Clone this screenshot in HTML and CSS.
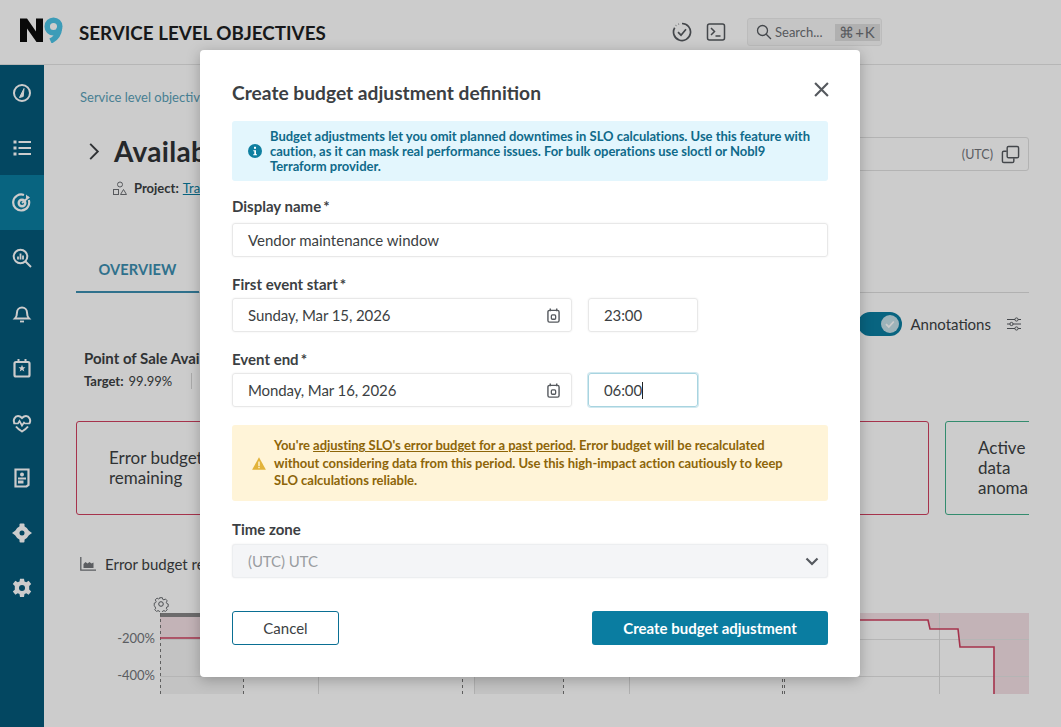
FILE: index.html
```html
<!DOCTYPE html>
<html lang="en">
<head>
<meta charset="utf-8">
<title>Service Level Objectives</title>
<link rel="stylesheet" href="styles.css">
</head>
<body>
<div class="app">
  <header class="topbar">
    <svg class="logo" viewBox="0 0 44 26"><path d="M0 1.500h7l9 13V1.500h7V25h-6.500L7 11.500V25H0z" fill="#0c0c0c"/><circle cx="33.500" cy="9.500" r="6.300" fill="none" stroke="#4cc3e6" stroke-width="5.500"/><path d="M39.500 11c-.5 6-3.500 10.500-9 13" fill="none" stroke="#4cc3e6" stroke-width="5.500"/></svg>
    <h1 class="app-title">SERVICE LEVEL OBJECTIVES</h1>
    <div class="top-actions">
      <svg class="top-icon" viewBox="0 0 20 20"><path d="M10 1.500a8.500 8.500 0 1 1-7.300 4.200" fill="none" stroke="#55595e" stroke-width="1.700"/><path d="M3.800 3.700l.4-.4M6.500 2.200l.4-.2" stroke="#55595e" stroke-width="1.700"/><path d="M6 10.200l3 3 5-6" fill="none" stroke="#55595e" stroke-width="1.700"/></svg>
      <svg class="top-icon" viewBox="0 0 20 20"><rect x="1.500" y="2" width="17" height="16" rx="2" fill="none" stroke="#55595e" stroke-width="1.500"/><path d="M5 6l3.500 3.500L5 13M9.500 14h5" fill="none" stroke="#55595e" stroke-width="1.500"/></svg>
      <div class="search">
        <svg class="search-icon" viewBox="0 0 16 16"><circle cx="6.500" cy="6.500" r="5" fill="none" stroke="#55595e" stroke-width="1.300"/><path d="M10.200 10.200l4.800 4.800" stroke="#55595e" stroke-width="1.300"/></svg>
        <span class="search-text">Search...</span>
        <span class="kbd">⌘+K</span>
      </div>
    </div>
  </header>
  <div class="body-row">
    <nav class="sidebar">
      <div class="nav-item"><svg viewBox="0 0 20 20"><circle cx="10" cy="10" r="8" fill="none" stroke="#fff" stroke-width="2"/><path d="M7.500 14.500l4.500-9-.8 8z" fill="#fff" stroke="#fff"/></svg></div>
      <div class="nav-item"><svg viewBox="0 0 20 20"><path d="M6.500 4H19M6.500 10H19M6.500 16H19" stroke="#fff" stroke-width="2"/><path d="M1.500 4h3M1.500 10h3M1.500 16h3" stroke="#fff" stroke-width="3"/></svg></div>
      <div class="nav-item active"><svg viewBox="0 0 20 20"><path d="M16.800 7a8 8 0 1 1-4.800-5" fill="none" stroke="#fff" stroke-width="2.200"/><circle cx="10" cy="10" r="3.300" fill="none" stroke="#fff" stroke-width="2.400"/><path d="M10 10l7-6" stroke="#fff" stroke-width="1.800"/><path d="M14 1.500v3.500h4z" fill="#fff"/></svg></div>
      <div class="nav-item"><svg viewBox="0 0 20 20"><circle cx="8.500" cy="8.500" r="6.800" fill="none" stroke="#fff" stroke-width="2"/><path d="M13.500 13.500L19 19" stroke="#fff" stroke-width="2"/><path d="M6 11.500V8.500M8.500 11.500V5.500M11 11.500V7.500" stroke="#fff" stroke-width="1.800"/></svg></div>
      <div class="nav-item"><svg viewBox="0 0 20 20"><path d="M3 15.500h14c-1.500-1.500-2-2.500-2-6a5 5 0 0 0-10 0c0 3.500-.5 4.500-2 6z" fill="none" stroke="#fff" stroke-width="2"/><path d="M8 18.500h4" stroke="#fff" stroke-width="1.800"/></svg></div>
      <div class="nav-item"><svg viewBox="0 0 20 20"><rect x="2.500" y="4" width="15" height="14.500" rx="1.500" fill="none" stroke="#fff" stroke-width="2.200"/><path d="M6.500 1v3.500M13.500 1v3.500" stroke="#fff" stroke-width="2"/><path d="M10 6.800l1 2.400 2.500.1-2 1.600.8 2.500-2.300-1.400-2.300 1.400.8-2.500-2-1.600 2.500-.1z" fill="#fff"/></svg></div>
      <div class="nav-item"><svg viewBox="0 0 20 20"><path d="M4 13.500c1.500 2 3.500 3.500 6 5 2.500-1.500 4.500-3 6-5" fill="none" stroke="#fff" stroke-width="2"/><path d="M2.600 10.500C.5 7 3 3 6 3c1.800 0 3 1 4 2 1-1 2.200-2 4-2 3 0 5.500 4 3.400 7.500" fill="none" stroke="#fff" stroke-width="2"/><path d="M1.500 10.500H6l1.500-2.500 2.500 4.500 2-3 1 1h5" fill="none" stroke="#fff" stroke-width="1.700"/></svg></div>
      <div class="nav-item"><svg viewBox="0 0 20 20"><path d="M3.500 1.500h13v15.500l-2 1.500h-11z" fill="none" stroke="#fff" stroke-width="2.200"/><circle cx="10" cy="6.500" r="2" fill="#fff"/><rect x="6" y="9.500" width="8" height="2" fill="#fff"/><rect x="6" y="12.500" width="5.500" height="3" fill="#fff"/></svg></div>
      <div class="nav-item"><svg viewBox="0 0 20 20"><circle cx="10" cy="10" r="4.700" fill="none" stroke="#fff" stroke-width="4.400"/><rect x="7.500" y="0.500" width="5" height="5" rx="1" fill="#fff"/><rect x="7.500" y="14.500" width="5" height="5" rx="1" fill="#fff"/><path d="M0 10l4.500-3.200v6.400zM20 10l-4.500-3.200v6.400z" fill="#fff"/></svg></div>
      <div class="nav-item"><svg viewBox="0 0 20 20"><path d="M8 .8h4l.5 2.700 1.800.8 2.300-1.500 2.600 3.300-2 1.900v3.600l2 1.900-2.600 3.300-2.300-1.500-1.800.8-.5 2.900H8l-.5-2.900-1.800-.8-2.300 1.500L.8 13.600l2-1.900V8l-2-1.900 2.600-3.300 2.300 1.500 1.800-.8z" fill="#fff"/><circle cx="10" cy="10" r="3" fill="#04597a"/></svg></div>
    </nav>
    <main class="content">
      <div class="crumb">Service level objectives</div>
      <div class="slo-head">
        <svg class="chev" viewBox="0 0 12 20"><path d="M2 2l8 8-8 8" fill="none" stroke="#3c3f43" stroke-width="2"/></svg>
        <div class="slo-name">Availability</div>
        <div class="range"><span class="utc">(UTC)</span><svg class="copy" viewBox="0 0 20 20"><rect x="6.500" y="1.500" width="12" height="12" rx="1.500" fill="none" stroke="#55595e" stroke-width="1.500"/><path d="M6 6.500H3a1.500 1.500 0 0 0-1.500 1.500v9A1.500 1.500 0 0 0 3 18.500h9a1.500 1.500 0 0 0 1.500-1.500v-3" fill="none" stroke="#55595e" stroke-width="1.500"/></svg></div>
      </div>
      <div class="project">
        <svg class="proj-icon" viewBox="0 0 14 14"><circle cx="7" cy="3.500" r="2.500" fill="none" stroke="#6d7075"/><rect x=".5" y="8.500" width="5" height="5" fill="none" stroke="#6d7075"/><path d="M10.500 8.500l3 5h-6z" fill="none" stroke="#6d7075"/></svg>
        <b>Project:</b><span class="proj-link">Train</span>
      </div>
      <div class="tabs"><div class="tab-active">OVERVIEW</div></div>
      <div class="annot-row">
        <span class="toggle"><span class="knob"><svg viewBox="0 0 14 14"><path d="M3 7.200l2.800 2.800 5-5.500" fill="none" stroke="#fff" stroke-width="1.800"/></svg></span></span>
        <span class="annot-label">Annotations</span>
        <svg class="sliders" viewBox="0 0 16 14"><path d="M1 2.500h14M1 7h14M1 11.500h14" stroke="#55595e"/><circle cx="10.500" cy="2.500" r="1.600" fill="#ffffff" stroke="#55595e"/><circle cx="5.500" cy="7" r="1.600" fill="#ffffff" stroke="#55595e"/><circle cx="10.500" cy="11.500" r="1.600" fill="#ffffff" stroke="#55595e"/></svg>
      </div>
      <div class="slo-title">Point of Sale Availability</div>
      <div class="target"><b>Target:</b> 99.99%<span class="vsep"></span></div>
      <div class="cards">
        <div class="card card-red"><span class="card-text">Error budget<br>remaining</span></div>
        <div class="card card-green"><span class="card-text">Active<br>data<br>anomalies</span></div>
      </div>
      <div class="chart-title">
        <svg class="chart-icon" viewBox="0 0 16 14"><path d="M.8 0v13.200H16" fill="none" stroke="#72757a" stroke-width="1.300"/><path d="M3.500 11V7l2-2 2 1.500L9.500 5l2 1.500 2-1V11z" fill="#72757a"/></svg>
        Error budget remaining
      </div>
      <div class="chart">
        <svg class="gear" viewBox="0 0 16 16"><path d="M6.500 1h3l.4 1.800 1.400.6 1.600-1 2 2.100-1 1.600.6 1.400 1.500.5v2.900l-1.500.4-.6 1.400 1 1.600-2 2-1.600-1-1.400.6-.4 1.500h-3l-.4-1.500-1.400-.6-1.600 1-2-2 1-1.600-.6-1.400L.5 9.900V7l1.500-.5.600-1.400-1-1.600 2-2.100 1.600 1 1.400-.6z" fill="none" stroke="#5a5d62" transform="translate(.8 .8) scale(.9)"/><circle cx="8" cy="8" r="2.300" fill="none" stroke="#5a5d62"/></svg>
        <span class="axis axis-200">-200%</span>
        <span class="axis axis-400">-400%</span>
        <svg class="plot" viewBox="0 0 869 81" preserveAspectRatio="none">
          <rect x="0" y="0" width="83" height="81" fill="#f4f4f4"/>
          <rect x="314" y="0" width="89" height="81" fill="#f4f4f4"/>
          <path d="M0 0H869V81H834V34H800L798 16H770L768 7H600V25H0z" fill="#f4e0e5"/>
          <rect x="0" y="0" width="200" height="4" fill="#888687"/>
          <path d="M0 26.500H869M0 63.500H869" stroke="#e3e3e3"/>
          <path d="M158.500 0V81M314.500 0V81M469.500 0V81M779.500 0V81" stroke="#dcdcdc"/>
          <path d="M.5 0V81M83.500 0V81M302.500 0V81M403.500 0V81M622.500 0V81M624.500 0V81" stroke="#777" stroke-dasharray="3 3" fill="none"/>
          <path d="M0 25H100M600 7H768L770 16H798L800 34H834V81" fill="none" stroke="#cf3f5f" stroke-width="1.600"/>
        </svg>
      </div>
    </main>
  </div>
</div>

<div class="overlay"></div>

<section class="modal">
  <div class="modal-head">
    <h2 class="modal-title">Create budget adjustment definition</h2>
    <svg class="close" viewBox="0 0 14 14"><path d="M1 1l12 12M13 1L1 13" stroke="#55595e" stroke-width="2"/></svg>
  </div>
  <div class="notice notice-info">
    <svg class="notice-icon" viewBox="0 0 14 14"><circle cx="7" cy="7" r="7" fill="#0f7fa0"/><rect x="6" y="2.800" width="2" height="2" fill="#fff"/><path d="M5.300 6.200H8v4h1v1H5.200v-1h1.100v-3h-1z" fill="#fff"/></svg>
    <p>Budget adjustments let you omit planned downtimes in SLO calculations. Use this feature with caution, as it can mask real performance issues. For bulk operations use sloctl or Nobl9 Terraform provider.</p>
  </div>
  <label class="field-label label-name">Display name<span class="req">*</span></label>
  <div class="input">Vendor maintenance window</div>
  <label class="field-label">First event start<span class="req">*</span></label>
  <div class="date-row">
    <div class="input date">Sunday, Mar 15, 2026
      <svg class="cal" viewBox="0 0 12 14"><path d="M3 .5v2.500M9 .5v2.500" stroke="#55595e" stroke-width="1.300"/><rect x=".8" y="2.200" width="10.400" height="11" rx="1.500" fill="none" stroke="#55595e" stroke-width="1.300"/><rect x="4" y="6.500" width="4" height="4" rx="1" fill="none" stroke="#55595e" stroke-width="1.200"/></svg>
    </div>
    <div class="input time">23:00</div>
  </div>
  <label class="field-label">Event end<span class="req">*</span></label>
  <div class="date-row">
    <div class="input date">Monday, Mar 16, 2026
      <svg class="cal" viewBox="0 0 12 14"><path d="M3 .5v2.500M9 .5v2.500" stroke="#55595e" stroke-width="1.300"/><rect x=".8" y="2.200" width="10.400" height="11" rx="1.500" fill="none" stroke="#55595e" stroke-width="1.300"/><rect x="4" y="6.500" width="4" height="4" rx="1" fill="none" stroke="#55595e" stroke-width="1.200"/></svg>
    </div>
    <div class="input time focus">06:00<span class="caret"></span></div>
  </div>
  <div class="notice notice-warn">
    <svg class="warn-icon" viewBox="0 0 14 13"><path d="M7 .3l6.900 12.400H.1z" fill="#e2b33a"/><rect x="6.300" y="4.500" width="1.400" height="4.500" fill="#fff5d9"/><rect x="6.300" y="9.800" width="1.400" height="1.400" fill="#fff5d9"/></svg>
    <p>You're <u>adjusting SLO's error budget for a past period</u>. Error budget will be recalculated without considering data from this period. Use this high-impact action cautiously to keep SLO calculations reliable.</p>
  </div>
  <label class="field-label label-zone">Time zone</label>
  <div class="input select">(UTC) UTC
    <svg class="select-chev" viewBox="0 0 14 9"><path d="M1.500 1.500L7 7l5.500-5.500" fill="none" stroke="#55595e" stroke-width="2.200"/></svg>
  </div>
  <div class="modal-actions">
    <button class="btn btn-cancel">Cancel</button>
    <button class="btn btn-primary">Create budget adjustment</button>
  </div>
</section>
</body>
</html>
```
FILE: styles.css
```css
* { box-sizing: border-box; }
html, body { margin: 0; height: 100%; }
body { font-family: "Lato", "Open Sans", sans-serif; color: #3c3f43; background: #fff; overflow: hidden; width: 1061px; height: 727px; position: relative; }
.app { width: 1061px; height: 727px; display: flex; flex-direction: column; overflow: hidden; }

.topbar { height: 65px; flex: none; display: flex; align-items: center; padding-left: 20px; border-bottom: 1px solid #e4e4e4; }
.logo { width: 44px; height: 26px; flex: none; margin-top: -5px; }
.app-title { margin: 0 0 0 15px; font-size: 18.800px; font-weight: 700; color: #1d1f22; }
.top-actions { margin-left: auto; margin-right: 179px; display: flex; align-items: center; gap: 14px; }
.top-icon { width: 20px; height: 20px; }
.search { margin-left: 7px; width: 135px; height: 28px; border: 1px solid #ececec; border-radius: 3px; background: #f7f7f7; display: flex; align-items: center; padding-left: 8px; gap: 3px; }
.search-icon { width: 16px; height: 16px; flex: none; }
.search-text { font-size: 13px; color: #6d7075; width: 57px; white-space: nowrap; }
.kbd { background: #dcdcdc; font-size: 15px; color: #6d7075; width: 45px; text-align: center; line-height: 17px; letter-spacing: .8px; white-space: nowrap; }

.body-row { flex: 1; display: flex; min-height: 0; }
.sidebar { width: 44px; flex: none; background: #04597a; display: flex; flex-direction: column; }
.nav-item { height: 55px; display: flex; align-items: center; justify-content: center; }
.nav-item svg { width: 20px; height: 20px; }
.nav-item.active { background: #0a7da1; }
.content { flex: 1; min-width: 0; position: relative; padding: 24px 32px 0; overflow: hidden; }

.crumb { font-size: 13px; color: #5a9fb8; line-height: 16px; margin-left: 4px; }
.slo-head { display: flex; align-items: center; margin-top: 26px; height: 40px; }
.chev { width: 12px; height: 19px; margin-left: 12px; }
.slo-name { font-size: 28px; font-weight: 700; margin-left: 14px; white-space: nowrap; color: #2f3236; letter-spacing: .3px; }
.range { width: 300px; height: 34px; border: 1px solid #e0e0e0; border-radius: 3px; display: flex; align-items: center; justify-content: flex-end; padding-right: 8px; gap: 8px; position: absolute; right: 32px; top: 72px; }
.utc { font-size: 12.500px; color: #72757a; }
.copy { width: 19px; height: 19px; }
.project { display: flex; align-items: center; margin-left: 37px; margin-top: 7px; font-size: 13px; height: 20px; }
.proj-icon { width: 14px; height: 14px; margin-right: 7px; }
.proj-link { color: #0a7da1; text-decoration: underline; margin-left: 4px; }
.tabs { margin-top: 51px; height: 44px; width: 953px; border-bottom: 1px solid #dedede; }
.tab-active { width: 123px; height: 44px; border-bottom: 2px solid #3b8eb0; font-size: 14.600px; font-weight: 700; color: #3b8eb0; text-align: center; line-height: 42px; letter-spacing: .1px; }
.annot-row { position: absolute; top: 247px; right: 39px; display: flex; align-items: center; height: 24px; }
.toggle { width: 44px; height: 24px; border-radius: 12px; background: #0a7da1; display: flex; align-items: center; justify-content: flex-end; padding-right: 3px; }
.knob { width: 18px; height: 18px; border-radius: 50%; background: #c5e0e8; display: flex; align-items: center; justify-content: center; }
.knob svg { width: 14px; height: 14px; }
.annot-label { margin-left: 8px; font-size: 15px; color: #3c3f43; }
.sliders { width: 16px; height: 14px; margin-left: 15px; }
.slo-title { margin: 56px 0 0 8px; font-size: 15px; font-weight: 700; line-height: 18px; white-space: nowrap; }
.target { margin: 6px 0 0 8px; font-size: 13px; line-height: 16px; display: flex; align-items: center; gap: 5px; }
.vsep { width: 1px; height: 16px; background: #d5d5d5; margin-left: 14px; }
.cards { display: flex; gap: 16px; margin-top: 32px; height: 94px; width: 953px; overflow: hidden; }
.card { border: 1px solid; border-radius: 3px; display: flex; align-items: center; font-size: 17px; line-height: 20px; color: #3c3f43; flex: none; }
.card-red { width: 853px; border-color: #d0405f; padding-left: 32px; }
.card-green { width: 200px; border-color: #40b08a; padding-left: 32px; white-space: nowrap; }
.chart-title { display: flex; align-items: center; margin: 40px 0 0 4px; font-size: 15px; gap: 9px; height: 18px; white-space: nowrap; }
.chart-icon { width: 16px; height: 14px; }
.chart { position: relative; height: 98px; margin-top: 23px; }
.gear { position: absolute; left: 77px; top: 0; width: 16px; height: 16px; }
.axis { position: absolute; left: 0; width: 79px; text-align: right; font-size: 13px; color: #72757a; line-height: 16px; }
.axis-200 { top: 34px; }
.axis-400 { top: 71px; }
.plot { position: absolute; left: 84px; top: 17px; width: 869px; height: 81px; }

.overlay { position: absolute; inset: 0; background: rgba(0,0,0,.2); }

.modal { position: absolute; left: 200px; top: 50px; width: 660px; height: 627px; background: #fff; border-radius: 4px; box-shadow: 0 3px 14px rgba(0,0,0,.25); padding: 27px 32px 0; display: flex; flex-direction: column; }
.modal-head { display: flex; align-items: flex-start; justify-content: space-between; height: 44px; flex: none; }
.modal-title { margin: 4px 0 0; font-size: 19.200px; font-weight: 700; color: #3c3f43; line-height: 24px; }
.close { width: 15px; height: 15px; margin: 5px -1px 0 0; }
.notice { display: flex; align-items: center; border-radius: 3px; flex: none; }
.notice p { margin: 0; }
.notice-info { background: #e3f6fd; height: 60px; padding: 0 14px 0 16px; color: #0f6a8a; font-size: 13px; font-weight: 700; line-height: 15px; letter-spacing: -.03px; }
.notice-icon { width: 14px; height: 14px; flex: none; margin-right: 8px; }
.field-label { display: block; font-size: 15px; font-weight: 700; line-height: 18px; color: #3c3f43; margin-top: 18px; margin-bottom: 5px; }
.req { margin-left: 2px; }
.label-name { margin-top: 16px; margin-bottom: 8px; }
.label-zone { margin-top: 19px; margin-bottom: 6px; }
.input { height: 34px; flex: none; border: 1px solid #e8e8e8; border-radius: 3px; font-size: 15px; color: #3c3f43; display: flex; align-items: center; padding-left: 15px; position: relative; box-shadow: 0 0 2px rgba(0,0,0,.08); }
.date-row { display: flex; gap: 16px; flex: none; }
.date { width: 340px; letter-spacing: -.1px; }
.cal { position: absolute; right: 11px; top: 9px; width: 13px; height: 15px; }
.time { width: 110px; letter-spacing: -.1px; }
.focus { border-color: #a8d4e0; box-shadow: 0 0 0 1px rgba(120,190,210,.35); }
.caret { width: 1px; height: 17px; background: #222; }
.notice-warn { margin-top: 18px; background: #fff4d8; height: 76px; padding: 1px 30px 0 20px; color: #8d6508; font-size: 13px; font-weight: 700; line-height: 17.500px; letter-spacing: -.03px; }
.warn-icon { width: 14px; height: 13px; flex: none; margin-right: 8px; }
.select { background: #f4f5f7; color: #9a9da1; border-color: #eceef0; letter-spacing: -.1px; }
.select-chev { position: absolute; right: 8px; top: 12px; width: 14px; height: 9px; }
.modal-actions { display: flex; justify-content: space-between; margin-top: 33px; }
.btn { height: 34px; border-radius: 3px; font-family: inherit; font-size: 15px; padding: 0; }
.btn-cancel { width: 107px; background: #fff; border: 1px solid #0a6f93; color: #3c3f43; }
.btn-primary { width: 236px; background: #0a7da1; border: 0; color: #fff; font-weight: 700; }
```
